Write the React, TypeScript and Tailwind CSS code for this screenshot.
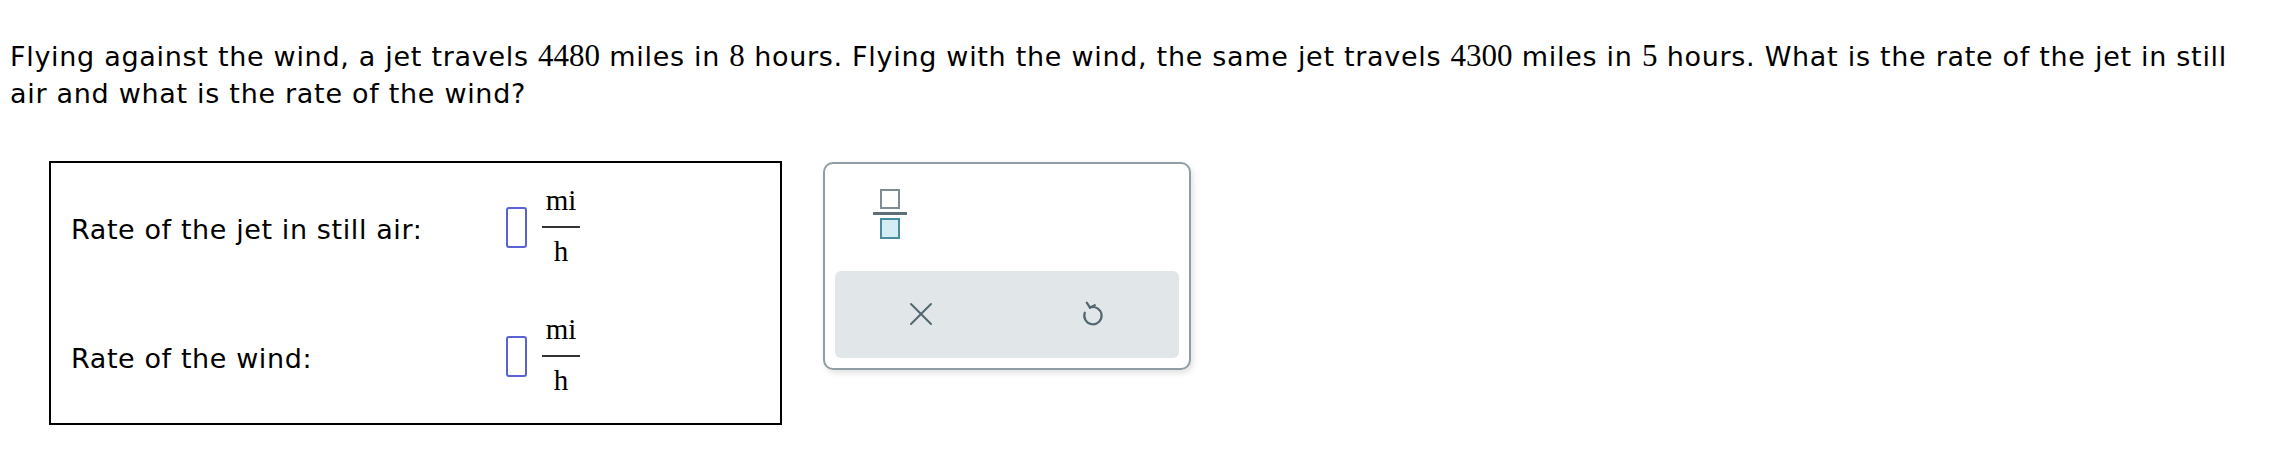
import React from 'react';

const sans = { fontFamily: '"DejaVu Sans", Verdana, sans-serif' };

// serif numbers inside the sentence
const Num: React.FC<{ children: React.ReactNode }> = ({ children }) => (
  <span className="font-['Liberation_Serif','Times_New_Roman',serif] text-[31px] leading-none tracking-normal">{children}</span>
);

const AnswerRow: React.FC<{ label: string }> = ({ label }) => (
  <div className="grid h-[129px] grid-cols-[435px_1fr] items-center">
    <span className="pt-[5px] text-[27px] tracking-[0.6px] text-black">{label}</span>
    <div className="flex items-center gap-[15px]">
      <div className="h-[41px] w-[21px] rounded-[3px] border-2 border-[#5b61d4]" />
      <div className="mb-[4px] flex w-[38px] flex-col items-center font-['Liberation_Serif','Times_New_Roman',serif] text-[29px] leading-none text-black">
        <span className="pb-[11px]">mi</span>
        <span className="h-[2px] w-full bg-[#333]" />
        <span className="pt-[9px]">h</span>
      </div>
    </div>
  </div>
);

const UndoIcon = () => (
  <svg width="28" height="30" viewBox="0 0 24 26" fill="none" stroke="#52666f" strokeWidth="1.9" strokeLinecap="round" strokeLinejoin="round">
    <path d="M9.4 7.4 A7.5 7.5 0 1 1 4.9 11.9" />
    <path d="M9.4 7.4 L6.6 3.2" />
    <path d="M9.4 7.4 L13.6 5.4" />
  </svg>
);

const ClearIcon = () => (
  <svg width="24" height="24" viewBox="0 0 24 24" fill="none" stroke="#52666f" strokeWidth="2" strokeLinecap="round">
    <path d="M2 2 L22 22" />
    <path d="M22 2 L2 22" />
  </svg>
);

const App: React.FC = () => {
  return (
    <div className="min-h-screen bg-white text-black" style={sans}>
      <p className="w-[2258px] pl-[10px] pt-[38px] text-[27px] leading-[37px] tracking-[0.7px]">
        Flying against the wind, a jet travels <Num>4480</Num> miles in <Num>8</Num> hours. Flying with the wind, the same jet
        travels <Num>4300</Num> miles in <Num>5</Num> hours. What is the rate of the jet in still air and what is the rate of
        the wind?
      </p>

      <div className="mt-[49px] flex items-start gap-[41px] pl-[49px]">
        {/* answer box */}
        <div className="h-[264px] w-[733px] border-2 border-black pl-[20px]">
          <AnswerRow label="Rate of the jet in still air:" />
          <AnswerRow label="Rate of the wind:" />
        </div>

        {/* editor palette */}
        <div className="mt-[1px] flex h-[208px] w-[368px] flex-col rounded-[10px] border-2 border-[#8e9ea4] p-[10px] shadow-[2px_3px_6px_rgba(0,0,0,0.12)]">
          <div className="flex h-[97px] items-start pl-[38px] pt-[15px]">
            <div className="flex w-[34px] flex-col items-center">
              <div className="h-[20px] w-[20px] border-2 border-[#7f8d92]" />
              <div className="my-[3px] h-[3px] w-[34px] bg-[#5f6f76]" />
              <div className="h-[21px] w-[20px] border-2 border-[#4a8c9f] bg-[#d4ecf4]" />
            </div>
          </div>
          <div className="flex h-[88px] items-center rounded-[6px] bg-[#e1e6e9]">
            <div className="flex flex-1 justify-center">
              <ClearIcon />
            </div>
            <div className="flex flex-1 justify-center">
              <UndoIcon />
            </div>
          </div>
        </div>
      </div>
    </div>
  );
};

export default App;
